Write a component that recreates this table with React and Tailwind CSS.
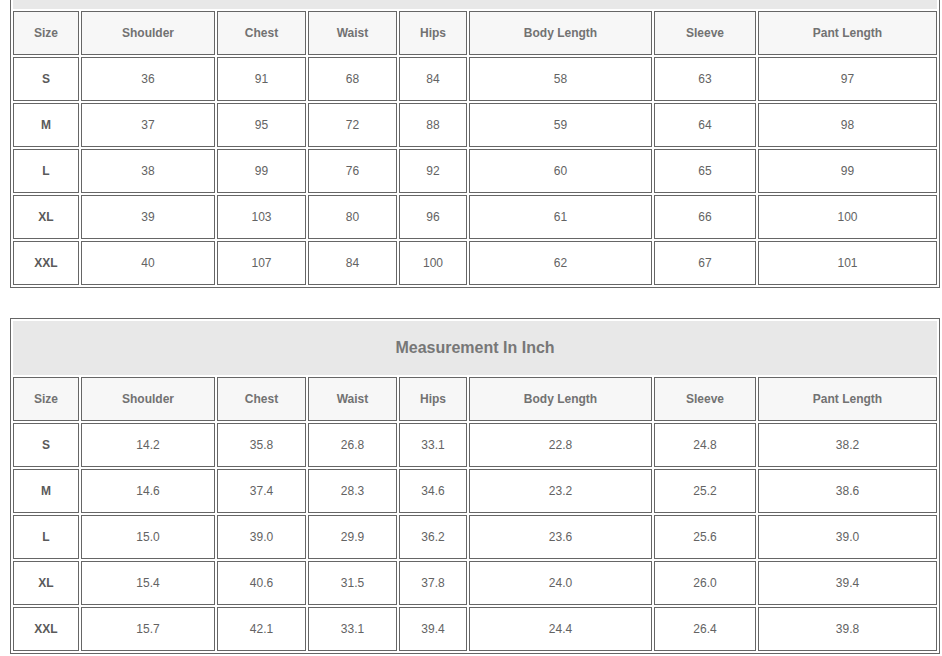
import React from "react";

const headers = ["Size", "Shoulder", "Chest", "Waist", "Hips", "Body Length", "Sleeve", "Pant Length"];

const cm = [
  ["S", "36", "91", "68", "84", "58", "63", "97"],
  ["M", "37", "95", "72", "88", "59", "64", "98"],
  ["L", "38", "99", "76", "92", "60", "65", "99"],
  ["XL", "39", "103", "80", "96", "61", "66", "100"],
  ["XXL", "40", "107", "84", "100", "62", "67", "101"],
];

const inch = [
  ["S", "14.2", "35.8", "26.8", "33.1", "22.8", "24.8", "38.2"],
  ["M", "14.6", "37.4", "28.3", "34.6", "23.2", "25.2", "38.6"],
  ["L", "15.0", "39.0", "29.9", "36.2", "23.6", "25.6", "39.0"],
  ["XL", "15.4", "40.6", "31.5", "37.8", "24.0", "26.0", "39.4"],
  ["XXL", "15.7", "42.1", "33.1", "39.4", "24.4", "26.4", "39.8"],
];

function SizeTable({ title, rows, className }) {
  return (
    <div
      className={
        "grid w-[930px] grid-cols-[66px_134px_89px_89px_68px_183px_102px_179px] gap-[2px] border border-[#666] bg-white p-[2px] " +
        className
      }
    >
      <div className="col-span-8 flex h-[54px] items-center justify-center bg-[#e8e8e8] text-[16px] font-bold text-[#777]">
        {title}
      </div>
      {headers.map((h) => (
        <div
          key={h}
          className="flex h-[44px] items-center justify-center border border-[#666] bg-[#f7f7f7] text-[12px] font-bold text-[#727272]"
        >
          {h}
        </div>
      ))}
      {rows.map((r) =>
        r.map((v, i) => (
          <div
            key={r[0] + i}
            className={
              "flex h-[44px] items-center justify-center border border-[#666] bg-white text-[12px] " +
              (i === 0 ? "font-bold text-[#5a5a5a]" : "text-[#636363]")
            }
          >
            {v}
          </div>
        ))
      )}
    </div>
  );
}

export default function App() {
  return (
    <div
      className="h-[656px] w-[942px] overflow-hidden bg-white pl-[10px]"
      style={{ fontFamily: '"Liberation Sans", Arial, sans-serif' }}
    >
      <SizeTable title="" rows={cm} className="-mt-[48px]" />
      <SizeTable title="Measurement In Inch" rows={inch} className="mt-[30px]" />
    </div>
  );
}
